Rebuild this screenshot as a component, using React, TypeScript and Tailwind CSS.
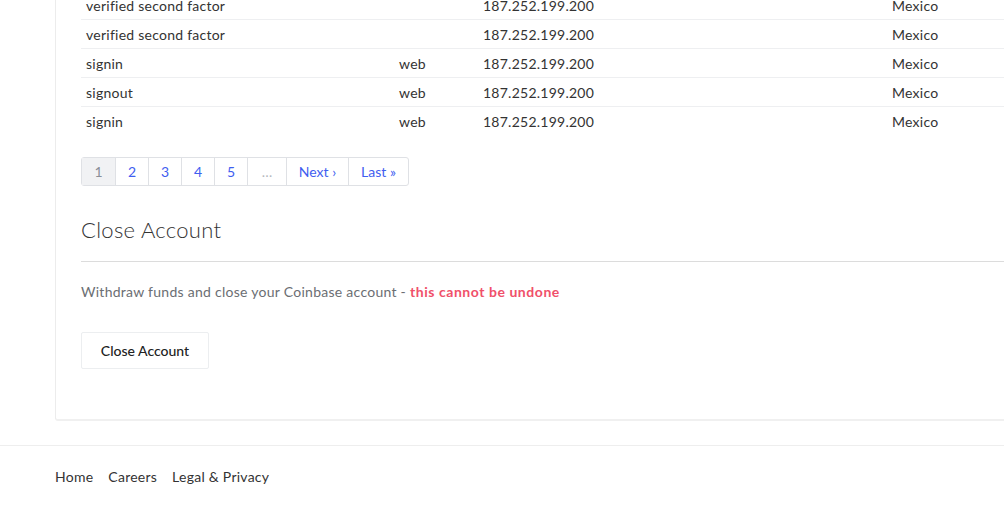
const ROWS = [
  { event: "verified second factor", source: "", ip: "187.252.199.200", location: "Mexico" },
  { event: "verified second factor", source: "", ip: "187.252.199.200", location: "Mexico" },
  { event: "signin", source: "web", ip: "187.252.199.200", location: "Mexico" },
  { event: "signout", source: "web", ip: "187.252.199.200", location: "Mexico" },
  { event: "signin", source: "web", ip: "187.252.199.200", location: "Mexico" },
];

const PAGES = [
  { label: "1", w: "w-[33px]", active: true },
  { label: "2", w: "w-[33px]" },
  { label: "3", w: "w-[33px]" },
  { label: "4", w: "w-[33px]" },
  { label: "5", w: "w-[33px]" },
  { label: "…", w: "w-[39px]", muted: true },
  { label: "Next ›", w: "w-[62px]" },
  { label: "Last »", w: "w-[60px]" },
];

function Pagination() {
  return (
    <div className="flex w-fit rounded-[3px] border border-[#dfe1e5] text-[14px] leading-none">
      {PAGES.map((p, i) => (
        <a
          key={i}
          className={[
            "flex h-[27px] items-center justify-center",
            p.w,
            i > 0 ? "border-l border-[#dfe1e5]" : "",
            p.active ? "bg-[#f1f2f4] text-[#8a8f98]" : p.muted ? "text-[#b5b8be]" : "text-[#3f5ef0]",
          ].join(" ")}
        >
          {p.label}
        </a>
      ))}
    </div>
  );
}

export default function App() {
  return (
    <div className="min-h-screen overflow-hidden bg-white font-['Lato','Liberation_Sans',sans-serif] text-[#333]">
      <div className="ml-[55px] -mt-[9px] w-[1200px] rounded-bl-[3px] border-b-2 border-l border-b-[#f0f0f0] border-l-[#ececec] pl-[25px] pb-[50px]">
        <div className="text-[14px] tracking-[0.25px]">
          {ROWS.map((r, i) => (
            <div
              key={i}
              className={[
                "grid h-[29px] grid-cols-[313px_84px_409px_1fr] items-center",
                i < ROWS.length - 1 ? "border-b border-[#eeeff1]" : "",
              ].join(" ")}
            >
              <div className="pl-[5px]">{r.event}</div>
              <div className="pl-[5px]">{r.source}</div>
              <div className="pl-[5px]">{r.ip}</div>
              <div className="pl-[5px]">{r.location}</div>
            </div>
          ))}
        </div>

        <div className="mt-[21px]">
          <Pagination />
        </div>

        <h2 className="mt-[30px] text-[22px] font-light leading-[28px] tracking-[0.3px] text-[#333]">
          Close Account
        </h2>
        <div className="mt-[17px] border-t border-[#dcdcdc]" />

        <p className="mt-[21px] text-[14px] leading-[18px] tracking-[0.27px] text-[#6b6e73]">
          Withdraw funds and close your Coinbase account -{" "}
          <span className="font-bold tracking-[0.55px] text-[#f0506a]">this cannot be undone</span>
        </p>

        <button className="mt-[31px] h-[37px] w-[128px] rounded-[2px] border border-[#eceef0] bg-white text-[14px] font-medium text-[#222]">
          Close Account
        </button>
      </div>

      <footer className="mt-[24px] border-t border-[#eeeeee] pl-[55px] pt-[22px]">
        <nav className="flex gap-[15px] text-[14px] leading-[18px] tracking-[0.25px] text-[#333]">
          <a>Home</a>
          <a>Careers</a>
          <a>Legal &amp; Privacy</a>
        </nav>
      </footer>
    </div>
  );
}
